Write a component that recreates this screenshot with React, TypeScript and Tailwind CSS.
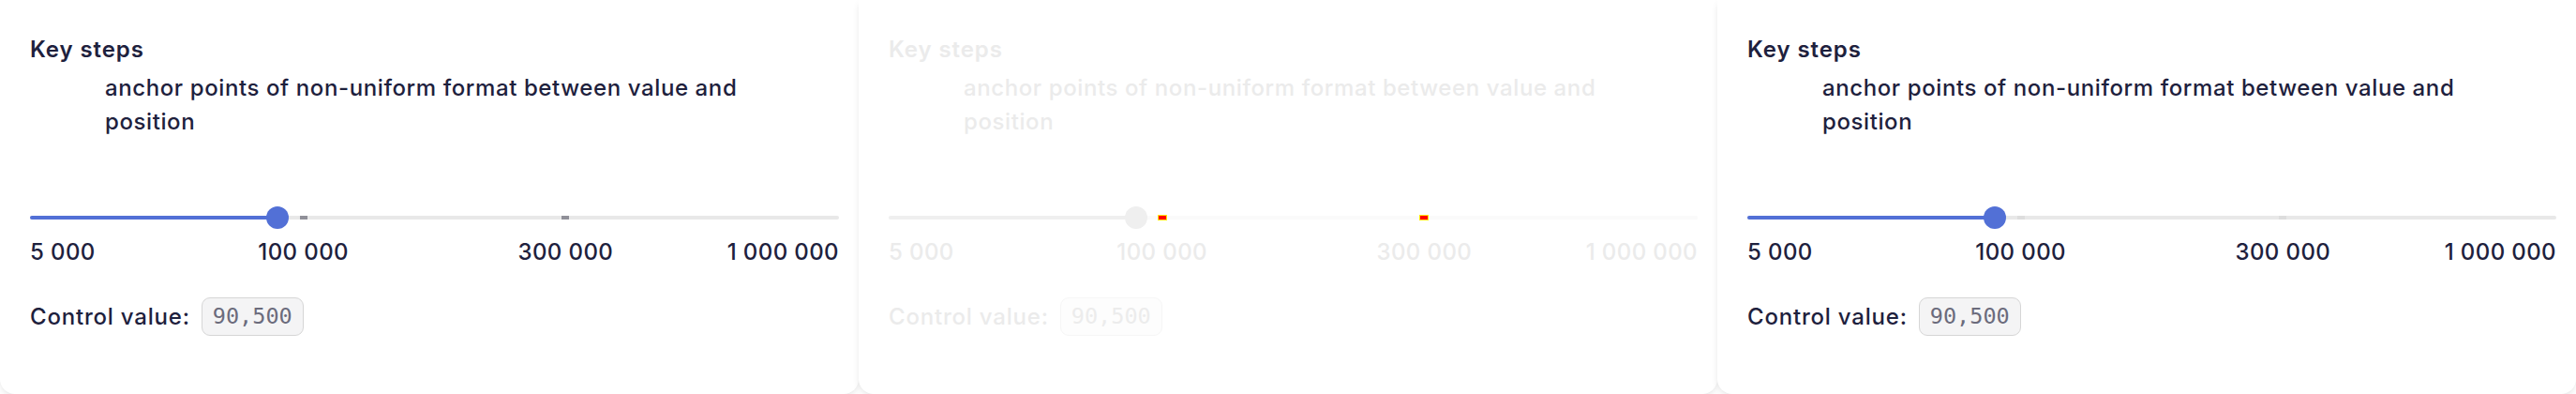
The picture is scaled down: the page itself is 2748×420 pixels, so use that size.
import React from "react";

type Variant = "normal" | "faded" | "light";

const TRACK_W = 863;
const THUMB = 24;
const steps = [
  { label: "5 000", pos: 0, align: "left" },
  { label: "100 000", pos: 1 / 3, align: "center" },
  { label: "300 000", pos: 2 / 3, align: "center" },
  { label: "1 000 000", pos: 1, align: "right" },
];
const thumbPos = 0.3; // 90,500 between 5,000 and 100,000

function px(p: number) {
  return THUMB / 2 + p * (TRACK_W - THUMB);
}

function Panel({ variant }: { variant: Variant }) {
  const faded = variant === "faded";
  const text = faded ? "text-[#ebebeb]" : "text-[#1e213d]";
  const fill = faded ? "bg-[#efefef]" : "bg-[#5270d6]";
  const rest = faded ? "bg-[#fafafa]" : "bg-[#e8e8e8]";
  const tick =
    variant === "faded"
      ? "bg-[#ff0000] ring-1 ring-[#ffe800]"
      : variant === "light"
      ? "bg-[#dddddd]"
      : "bg-[#909098]";
  const thumb = faded ? "bg-[#efefef]" : "bg-[#5270d6]";
  const codeBox = faded
    ? "border-[#f6f6f6] bg-[#fdfdfd] text-[#ececec]"
    : "border-[#d6d6d6] bg-[#f4f4f5] text-[#6b6b7c]";

  return (
    <div className="w-[916px] h-[420px] shrink-0 bg-white rounded-b-[16px] shadow-[0_3px_8px_-2px_rgba(0,0,0,0.14)] pl-[32px] pr-[21px] pt-[35px] font-['Inter',sans-serif]">
      <div className={`text-[24px] leading-[36px] font-semibold tracking-[0.9px] ${text}`}>Key steps</div>
      <div className={`mt-[5px] pl-[80px] max-w-[800px] text-[24px] leading-[36px] font-medium tracking-[0.6px] ${text}`}>
        anchor points of non-uniform format between value and position
      </div>

      <div className="relative mt-[72px] h-[24px] w-[863px]">
        <div className={`absolute left-0 right-0 top-[10px] h-[4px] rounded-full ${rest}`} />
        <div
          className={`absolute left-0 top-[10px] h-[4px] rounded-l-full ${fill}`}
          style={{ width: px(thumbPos) }}
        />
        {steps.slice(1, 3).map((s) => (
          <div
            key={s.label}
            className={`absolute top-[10px] h-[4px] w-[8px] ${tick}`}
            style={{ left: px(s.pos) - 4 }}
          />
        ))}
        <div
          className={`absolute top-0 h-[24px] w-[24px] rounded-full ${thumb}`}
          style={{ left: px(thumbPos) - 12 }}
        />
      </div>

      <div className={`relative mt-[7px] h-[36px] w-[863px] text-[24px] leading-[36px] font-medium tracking-[0.4px] ${text}`}>
        {steps.map((s) => (
          <span
            key={s.label}
            className="absolute top-0 whitespace-nowrap"
            style={
              s.align === "left"
                ? { left: 0 }
                : s.align === "right"
                ? { right: 0 }
                : { left: px(s.pos), transform: "translateX(-50%)" }
            }
          >
            {s.label}
          </span>
        ))}
      </div>

      <div className={`mt-[30px] flex items-center gap-[12px] text-[24px] leading-[36px] font-medium ${text}`}>
        <span className="tracking-[0.8px]">Control value:</span>
        <span
          className={`rounded-[9px] border-[1.5px] px-[11px] py-[6px] font-['DejaVu_Sans_Mono',monospace] text-[23.5px] leading-[27px] font-normal ${codeBox}`}
        >
          90,500
        </span>
      </div>
    </div>
  );
}

export default function App() {
  return (
    <div className="flex h-[420px] w-[2748px] overflow-hidden bg-white">
      <Panel variant="normal" />
      <Panel variant="faded" />
      <Panel variant="light" />
    </div>
  );
}
